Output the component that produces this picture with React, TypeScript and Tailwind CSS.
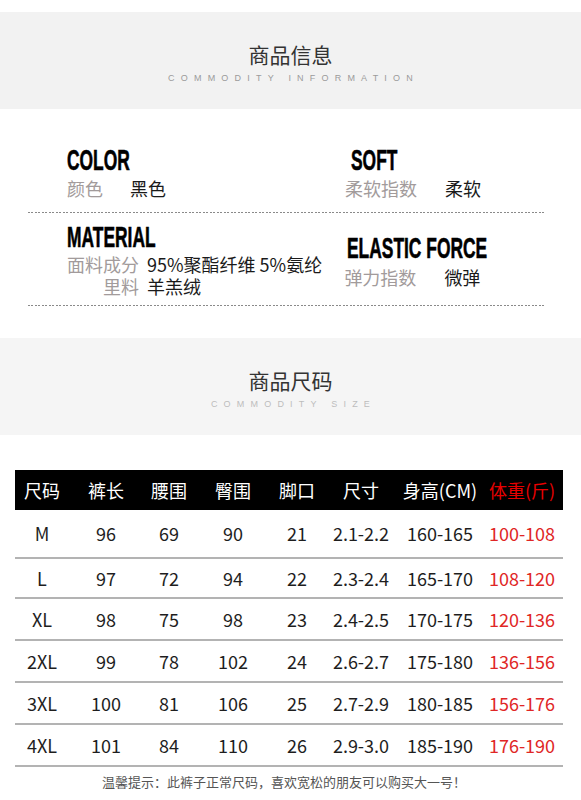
const rows = [
  ["M", "96", "69", "90", "21", "2.1-2.2", "160-165", "100-108"],
  ["L", "97", "72", "94", "22", "2.3-2.4", "165-170", "108-120"],
  ["XL", "98", "75", "98", "23", "2.4-2.5", "170-175", "120-136"],
  ["2XL", "99", "78", "102", "24", "2.6-2.7", "175-180", "136-156"],
  ["3XL", "100", "81", "106", "25", "2.7-2.9", "180-185", "156-176"],
  ["4XL", "101", "84", "110", "26", "2.9-3.0", "185-190", "176-190"],
];

const rowHeights = ["h-[49px]", "h-[40px]", "h-[42px]", "h-[42px]", "h-[42px]", "h-[42px]"];

const headers = ["尺码", "裤长", "腰围", "臀围", "脚口", "尺寸", "身高(CM)"];

function SectionBand({ title, subtitle, tone, subTone }: { title: string; subtitle: string; tone: string; subTone: string }) {
  return (
    <div className={`h-[97px] flex flex-col items-center ${tone}`}>
      <div className="mt-[30px] text-[21px] leading-[24px] text-[#333]">{title}</div>
      <div className={`mt-[6px] text-[9px] leading-[12px] tracking-[6.2px] pl-[6px] font-['Liberation_Sans',sans-serif] ${subTone}`}>
        {subtitle}
      </div>
    </div>
  );
}

function Heading({ children }: { children: string }) {
  return (
    <div className="h-[29px]">
      <span className="inline-block origin-left scale-x-[0.6] text-[29px] leading-[29px] font-bold text-black font-['Liberation_Sans',sans-serif] [-webkit-text-stroke:0.6px_black] whitespace-nowrap">
        {children}
      </span>
    </div>
  );
}

function Dotted() {
  return (
    <div className="ml-[28px] w-[518px] h-px bg-[repeating-linear-gradient(to_right,#8a8a8a_0_2px,transparent_2px_3.5px)]" />
  );
}

export default function App() {
  return (
    <div className="w-[581px] h-[800px] bg-white pt-[12px] overflow-hidden font-['Noto_Sans_CJK_SC',sans-serif]">
      <SectionBand title="商品信息" subtitle="COMMODITY INFORMATION" tone="bg-[#f2f2f2]" subTone="text-[#9b9b9b]" />

      {/* Product attributes */}
      <div className="pt-[37px]">
        <div className="flex h-[66px]">
          <div className="w-[339px] pl-[67px]">
            <Heading>COLOR</Heading>
            <div className="mt-[2px] flex text-[18px] leading-[22px]">
              <span className="text-[#a29b9b]">颜色</span>
              <span className="ml-[27px] text-[#1a1a1a]">黑色</span>
            </div>
          </div>
          <div className="pl-[6px]">
            <div className="ml-[6px]">
              <Heading>SOFT</Heading>
            </div>
            <div className="mt-[2px] flex text-[18px] leading-[22px]">
              <span className="text-[#a29b9b]">柔软指数</span>
              <span className="ml-[28px] text-[#1a1a1a]">柔软</span>
            </div>
          </div>
        </div>
        <Dotted />

        <div className="flex h-[92px] pt-[10px]">
          <div className="w-[339px] pl-[67px]">
            <Heading>MATERIAL</Heading>
            <div className="mt-[1px] grid grid-cols-[72px_1fr] gap-x-[8px] text-[18px] leading-[22px] whitespace-nowrap">
              <span className="text-right text-[#a29b9b]">面料成分</span>
              <span className="text-[#1a1a1a]">95%聚酯纤维 5%氨纶</span>
              <span className="text-right text-[#a29b9b]">里料</span>
              <span className="text-[#1a1a1a]">羊羔绒</span>
            </div>
          </div>
          <div className="pl-[6px] pt-[11px]">
            <div className="ml-[3px]">
              <Heading>ELASTIC FORCE</Heading>
            </div>
            <div className="mt-[3px] flex text-[18px] leading-[22px]">
              <span className="text-[#a29b9b]">弹力指数</span>
              <span className="ml-[28px] text-[#1a1a1a]">微弹</span>
            </div>
          </div>
        </div>
        <Dotted />
      </div>

      <div className="mt-[32px]">
        <SectionBand title="商品尺码" subtitle="COMMODITY SIZE" tone="bg-[#f5f5f5]" subTone="text-[#bdbdbd]" />
      </div>

      {/* Size chart */}
      <div className="mt-[35px] ml-[15px] w-[548px]">
        <div className="grid grid-cols-[54px_74px_52px_76px_52px_76px_82px_82px] h-[40px] items-center bg-black text-[18px] text-white">
          {headers.map((h) => (
            <div key={h} className="text-center whitespace-nowrap">
              {h}
            </div>
          ))}
          <div className="text-center text-[#e60000] whitespace-nowrap">体重(斤)</div>
        </div>
        {rows.map((r, i) => (
          <div
            key={r[0]}
            className={`grid grid-cols-[54px_74px_52px_76px_52px_76px_82px_82px] items-center border-b-2 border-[#b3b3b3] text-[18px] text-[#1e1e1e] ${rowHeights[i]}`}
          >
            {r.map((c, j) => (
              <div key={j} className={`text-center whitespace-nowrap ${j === 7 ? "text-[#e02626]" : ""}`}>
                {c}
              </div>
            ))}
          </div>
        ))}
        <div className="mt-[7px] pr-[10px] text-center text-[13px] leading-[16px] text-[#555]">
          温馨提示：此裤子正常尺码，喜欢宽松的朋友可以购买大一号！
        </div>
      </div>
    </div>
  );
}
